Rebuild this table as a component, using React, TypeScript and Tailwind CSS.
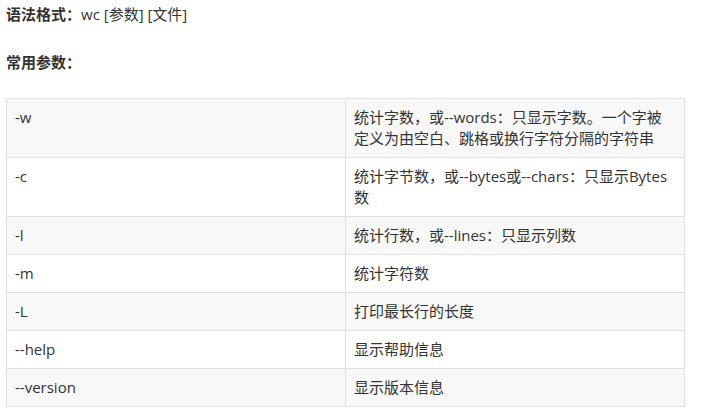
import React from "react";

const rows: [string, React.ReactNode][] = [
  ["-w", <>统计字数，或--words：只显示字数。一个字被<br />定义为由空白、跳格或换行字符分隔的字符串</>],
  ["-c", "统计字节数，或--bytes或--chars：只显示Bytes数"],
  ["-l", "统计行数，或--lines：只显示列数"],
  ["-m", "统计字符数"],
  ["-L", "打印最长行的长度"],
  ["--help", "显示帮助信息"],
  ["--version", "显示版本信息"],
];

export default function App() {
  return (
    <div
      className="w-[705px] h-[420px] bg-white text-[#333] text-[15px] leading-[21px] pl-[6px] pt-[4px]"
      style={{ fontFamily: '"Open Sans", "Noto Sans CJK SC", sans-serif' }}
    >
      <p>
        <span className="font-bold">语法格式：</span>wc [参数] [文件]
      </p>
      <p className="mt-[27px] font-bold">常用参数：</p>
      <table className="mt-[25px] w-[679px] border-collapse table-fixed">
        <colgroup>
          <col className="w-[339px]" />
          <col />
        </colgroup>
        <tbody>
          {rows.map(([k, v], i) => (
            <tr key={k} className={i % 2 === 0 ? "bg-[#f8f8f8]" : "bg-white"}>
              <td className="border border-[#e0e0e0] px-[8px] py-[8px] align-top">{k}</td>
              <td className="border border-[#e0e0e0] px-[8px] py-[8px] align-top">{v}</td>
            </tr>
          ))}
        </tbody>
      </table>
    </div>
  );
}
